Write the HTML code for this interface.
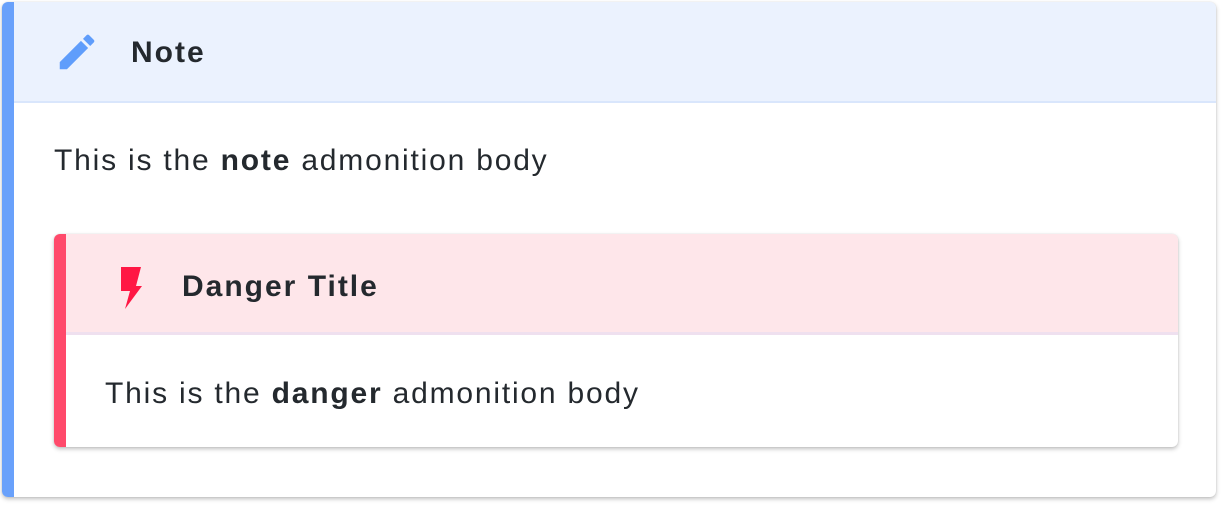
<!DOCTYPE html>
<html><head><style>
body{margin:0;background:#fff;font-family:"Liberation Sans",sans-serif;color:#24292e}
.ad{position:absolute;background:#fff;border-radius:6px;box-shadow:0 2px 4px rgba(0,0,0,.25),0 0 1px rgba(0,0,0,.15);overflow:hidden}
.bar{position:absolute;left:0;top:0;bottom:0;width:12px}
.hd{position:absolute;left:0;right:0;top:0}
.t{position:absolute;font-weight:bold;font-size:30px;letter-spacing:2px}
.b{position:absolute;font-size:30px;letter-spacing:1.8px}
</style></head><body>
<div class="ad" style="left:2px;top:2px;width:1214px;height:495px">
 <div class="hd" style="height:99px;background:#ebf2fe;border-bottom:2px solid #d9e6fc"></div>
 <div class="bar" style="background:#69a1fb"></div>
 <svg style="position:absolute;left:52px;top:27px" width="46" height="46" viewBox="0 0 24 24"><path fill="#5f9dfb" d="M3 17.25V21h3.75L17.81 9.94l-3.75-3.75L3 17.25zM20.71 7.04a1 1 0 000-1.41l-2.34-2.34a1 1 0 00-1.41 0l-1.83 1.83 3.75 3.75 1.83-1.83z"/></svg>
 <div class="t" style="left:129px;top:34px">Note</div>
 <div class="b" style="left:52px;top:142px">This is the <b>note</b> admonition body</div>
 <div class="ad" style="left:52px;top:232px;width:1124px;height:213px">
  <div class="hd" style="height:98px;background:#fee6ea;border-bottom:3px solid #efe0ef"></div>
  <div class="bar" style="background:#ff4a6b"></div>
  <svg style="position:absolute;left:66px;top:33px" width="22" height="42" viewBox="0 0 22 42"><path fill="#ff1744" d="M1 0h20l-5 19h6L5 42l5-18H1z"/></svg>
  <div class="t" style="left:128px;top:36px">Danger Title</div>
  <div class="b" style="left:51px;top:143px">This is the <b>danger</b> admonition body</div>
 </div>
</div>
</body></html>
